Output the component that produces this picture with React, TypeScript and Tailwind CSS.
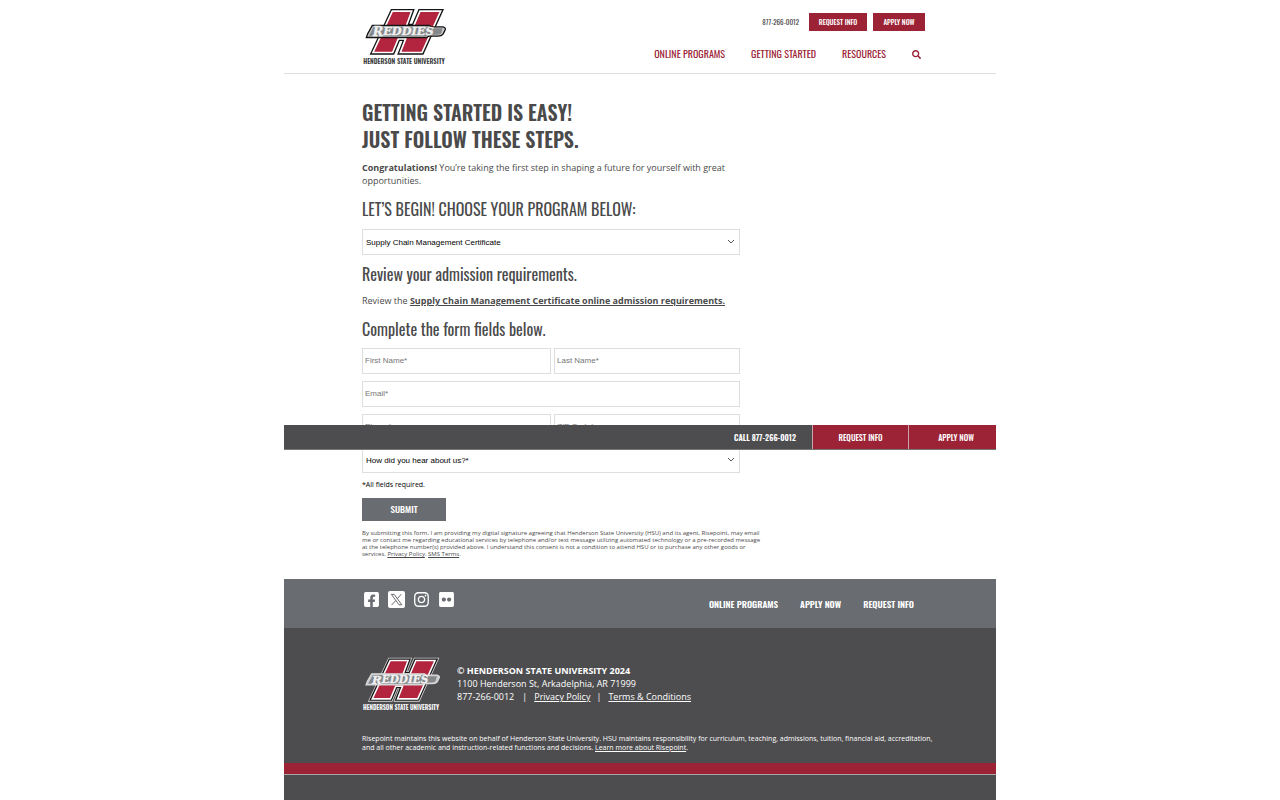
import { FaFacebookSquare, FaFlickr, FaInstagram, FaSearch } from "react-icons/fa";

const condensed = "font-['Oswald','Roboto_Condensed','Liberation_Sans_Narrow',sans-serif]";
const field =
  "block h-[26px] w-full min-w-0 border border-[#dedede] bg-white px-[2px] pb-[1px] font-['Liberation_Sans',Arial,sans-serif] text-[8px] placeholder:text-[#757575]";

function Logo({ className, light = false }: { className: string; light?: boolean }) {
  const h = "127,33 185,33 169,77 191,77 210,33 272,33 216,157 151,157 167,116 145,116 128,157 69,157";
  const banner = "M67 76 H238 L243 80 H279 Q290 83 284 92 L279 102 Q275 108 264 108 H236 L230 112 H49 L53 101 Z";
  return (
    <svg viewBox="36 24 252 170" className={className} role="img" aria-label="Henderson State University Reddies">
      <polygon points={h} fill="none" stroke={light ? "#d8d8d8" : "#ffffff"} strokeWidth="18" />
      <polygon points={h} fill="none" stroke="#151515" strokeWidth="13" />
      <polygon points={h} fill="#b3243f" stroke="#ffffff" strokeWidth="5" />
      <path d={banner} fill="#c9cbcd" stroke={light ? "#d8d8d8" : "#151515"} strokeWidth="4" />
      <path d="M71 80 H235 L241 84 H278 L273 101 L264 104 H233 L228 108 H56 Z" fill="#85888b" />
      <text
        x="68"
        y="108"
        fontSize="38"
        fontFamily="'DejaVu Serif', serif"
        fontWeight="700"
        fontStyle="italic"
        fill="#f0f0f0"
        stroke="#f0f0f0"
        strokeWidth="1"
      >
        R<tspan fontSize="34" y="106">EDDIES</tspan>
      </text>
      <text
        x="162"
        y="192"
        textAnchor="middle"
        fontFamily="Oswald, 'Roboto Condensed', 'Liberation Sans Narrow', sans-serif"
        fontWeight="600"
        fontSize="20"
        fill={light ? "#ffffff" : "#3c3c3d"}
      >
        HENDERSON STATE UNIVERSITY
      </text>
    </svg>
  );
}

function XIcon() {
  return (
    <svg viewBox="0 0 17 17" className="size-[17px]" aria-hidden="true">
      <rect width="17" height="17" rx="2" fill="#fff" />
      <path
        d="M3.4 3.4h2.8l7.6 10.4h-2.8zM13.2 3.2 9.4 7.6M7.7 9.5 3.6 14"
        fill="none"
        stroke="#55585c"
        strokeWidth="0.9"
      />
    </svg>
  );
}

function Select({ label, options }: { label: string; options: string[] }) {
  return (
    <div className="grid items-center">
      <select
        aria-label={label}
        className="col-start-1 row-start-1 block h-[26px] w-full appearance-none border border-[#dedede] bg-white px-[3px] pt-[2px] font-['Liberation_Sans',Arial,sans-serif] text-[8px] text-black"
      >
        {options.map((o) => (
          <option key={o}>{o}</option>
        ))}
      </select>
      <svg viewBox="0 0 8 6" className="pointer-events-none col-start-1 row-start-1 mr-[5px] h-[6px] w-[8px] justify-self-end" aria-hidden="true">
        <path d="M1 1l3 3 3-3" fill="none" stroke="#555" strokeWidth="1" />
      </svg>
    </div>
  );
}

function Header() {
  return (
    <header className="flex h-[74px] items-start justify-between border-b border-[#dedede] pr-[71px] pl-[78px]">
      <a href="#home" className="mt-[8px]">
        <Logo className="h-[57px] w-[84px]" />
      </a>
      <div className={`${condensed} mt-[13px] flex flex-col items-end`}>
        <div className="flex items-center text-[7px] leading-[18px]">
          <a href="tel:8772660012" className="mr-[10px] text-[#3c3c3d]">877-266-0012</a>
          <a href="#request" className="mr-[6px] w-[58px] bg-[#9b2335] text-center font-medium text-white">REQUEST INFO</a>
          <a href="#apply" className="w-[52px] bg-[#9b2335] text-center font-medium text-white">APPLY NOW</a>
        </div>
        <nav className="mt-[15px] mr-[4px] flex items-center gap-[26px] text-[10px] leading-[16px] text-[#9b2335]">
          <a href="#programs">ONLINE PROGRAMS</a>
          <a href="#start">GETTING STARTED</a>
          <a href="#resources">RESOURCES</a>
          <button type="button" aria-label="Search">
            <FaSearch className="size-[9px]" />
          </button>
        </nav>
      </div>
    </header>
  );
}

function ContactBar() {
  return (
    <div className={`${condensed} absolute inset-x-0 top-[425px] flex h-[25px] border-b border-[#777] bg-[#4d4d4f] text-[8px] leading-[24px] font-medium text-white`}>
      <a href="tel:8772660012" className="mr-[16px] ml-auto font-semibold">CALL 877-266-0012</a>
      <a href="#request" className="w-[96px] border-l border-[#c9a5ab] bg-[#9b2335] text-center">REQUEST INFO</a>
      <a href="#apply" className="w-[88px] border-l border-[#c9a5ab] bg-[#9b2335] pl-[7px] text-center">APPLY NOW</a>
    </div>
  );
}

function Main() {
  return (
    <main className="h-[505px] px-[78px] pt-[25px] text-[#4a4a4b]">
      <div className="max-w-[378px]">
        <h1 className={`${condensed} text-[20px] leading-[27px] font-semibold`}>
          GETTING STARTED IS EASY!
          <br />
          JUST FOLLOW THESE STEPS.
        </h1>
        <p className="mt-[8px] text-[9px] leading-[13px]">
          <strong>Congratulations!</strong> You’re taking the first step in shaping a future for yourself with great opportunities.
        </p>
        <h2 className={`${condensed} mt-[10px] text-[16px] leading-[24px]`}>LET’S BEGIN! CHOOSE YOUR PROGRAM BELOW:</h2>
        <form className="mt-[8px]" onSubmit={(e) => e.preventDefault()}>
          <Select label="Program" options={["Supply Chain Management Certificate"]} />
          <h3 className={`${condensed} mt-[7px] text-[16px] leading-[24px]`}>Review your admission requirements.</h3>
          <p className="mt-[8px] text-[9px] leading-[13px]">
            Review the{" "}
            <a href="#requirements" className="font-bold underline">Supply Chain Management Certificate online admission requirements.</a>
          </p>
          <h3 className={`${condensed} mt-[10px] text-[16px] leading-[24px]`}>Complete the form fields below.</h3>
          <div className="mt-[7px] grid grid-cols-[189fr_186fr] gap-x-[3px] gap-y-[7px]">
            <input className={field} aria-label="First Name" placeholder="First Name*" />
            <input className={field} aria-label="Last Name" placeholder="Last Name*" />
            <div className="col-span-2">
              <input className={field} type="email" aria-label="Email" placeholder="Email*" />
            </div>
            <input className={field} type="tel" aria-label="Phone" placeholder="Phone*" />
            <input className={field} aria-label="ZIP Code" placeholder="ZIP Code*" />
            <div className="col-span-2">
              <Select label="How did you hear about us?" options={["How did you hear about us?*"]} />
            </div>
          </div>
          <p className="mt-[6px] text-[7px] leading-[12px] text-black">*All fields required.</p>
          <button type="submit" className={`${condensed} mt-[7px] block h-[23px] w-[84px] bg-[#696c70] text-[9px] font-medium text-white`}>
            SUBMIT
          </button>
          <p className="mt-[9px] w-[402px] text-[6px] leading-[7px]">
            By submitting this form, I am providing my digital signature agreeing that Henderson State University (HSU) and its agent, Risepoint, may email me or contact me regarding educational services by telephone and/or text message utilizing automated technology or a pre-recorded message at the telephone number(s) provided above. I understand this consent is not a condition to attend HSU or to purchase any other goods or services. <a href="#privacy" className="underline">Privacy Policy</a>. <a href="#sms" className="underline">SMS Terms</a>.
          </p>
        </form>
      </div>
    </main>
  );
}

function Footer() {
  return (
    <footer className="flex grow flex-col bg-[#4d4d4f] text-white">
      <div className="flex h-[49px] items-start justify-between bg-[#696c70] pr-[82px] pl-[79px]">
        <div className="mt-[12px] flex items-center gap-[8px]">
          <a href="#facebook" aria-label="Facebook"><FaFacebookSquare className="size-[17px]" /></a>
          <a href="#x" aria-label="X"><XIcon /></a>
          <a href="#instagram" aria-label="Instagram"><FaInstagram className="size-[17px]" /></a>
          <a href="#flickr" aria-label="Flickr"><FaFlickr className="size-[17px]" /></a>
        </div>
        <nav className={`${condensed} mt-[17px] flex gap-[22px] text-[9px] leading-[16px] font-semibold`}>
          <a href="#programs">ONLINE PROGRAMS</a>
          <a href="#apply">APPLY NOW</a>
          <a href="#request">REQUEST INFO</a>
        </nav>
      </div>
      <div className="h-[135px] pt-[29px] pr-[58px] pl-[78px]">
        <div className="flex gap-[17px]">
          <Logo light className="h-[54px] w-[78px]" />
          <address className="mt-[7px] text-[9px] leading-[13px] not-italic">
            <strong className="block">© HENDERSON STATE UNIVERSITY 2024</strong>
            <span className="block">1100 Henderson St, Arkadelphia, AR 71999</span>
            <span className="flex">
              877-266-0012
              <span className="mr-[7px] ml-[8px]">|</span>
              <a href="#privacy" className="underline">Privacy Policy</a>
              <span className="mr-[7px] ml-[6px]">|</span>
              <a href="#terms" className="underline">Terms &amp; Conditions</a>
            </span>
          </address>
        </div>
        <p className="mt-[23px] text-[7px] leading-[9px]">
          Risepoint maintains this website on behalf of Henderson State University. HSU maintains responsibility for curriculum, teaching, admissions, tuition, financial aid, accreditation, and all other academic and instruction-related functions and decisions. <a href="#risepoint" className="underline">Learn more about Risepoint</a>.
        </p>
      </div>
      <div className="h-[12px] border-b border-[#a8a8a8] bg-[#9b2335]" />
    </footer>
  );
}

export default function App() {
  return (
    <div className="min-h-screen bg-white">
      <div className="relative mx-auto flex min-h-screen w-full max-w-[712px] flex-col font-['Open_Sans',sans-serif]">
        <Header />
        <Main />
        <ContactBar />
        <Footer />
      </div>
    </div>
  );
}
